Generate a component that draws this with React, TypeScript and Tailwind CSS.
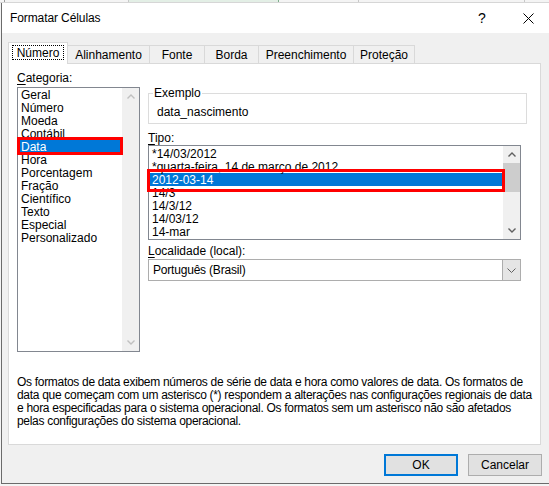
import { ReactNode } from "react";

const categories = [
  "Geral",
  "Número",
  "Moeda",
  "Contábil",
  "Data",
  "Hora",
  "Porcentagem",
  "Fração",
  "Científico",
  "Texto",
  "Especial",
  "Personalizado",
];

const types = [
  "*14/03/2012",
  "*quarta-feira, 14 de março de 2012",
  "2012-03-14",
  "14/3",
  "14/3/12",
  "14/03/12",
  "14-mar",
];

const tabs = [
  { label: "Alinhamento", w: "w-[82px]" },
  { label: "Fonte", w: "w-[55px]" },
  { label: "Borda", w: "w-[54px]" },
  { label: "Preenchimento", w: "w-[95px]" },
  { label: "Proteção", w: "w-[61px]" },
];

function Chevron({ dir, color }: { dir: "up" | "down"; color: string }) {
  return (
    <svg width="8" height="5" viewBox="0 0 8 5">
      <path
        d={dir === "up" ? "M0.5 4.5 L4 1 L7.5 4.5" : "M0.5 0.5 L4 4 L7.5 0.5"}
        fill="none"
        stroke={color}
        strokeWidth="1.4"
      />
    </svg>
  );
}

function ScrollBar({ enabled }: { enabled: boolean }) {
  const color = enabled ? "#606060" : "#c0c0c0";
  return (
    <div className="w-[17px] h-full bg-[#f0f0f0] flex flex-col">
      <div className="h-[17px] flex items-center justify-center">
        <Chevron dir="up" color={color} />
      </div>
      {enabled ? <div className="h-[29px] bg-[#cdcdcd]" /> : null}
      <div className="flex-1" />
      <div className="h-[17px] flex items-center justify-center">
        <Chevron dir="down" color={color} />
      </div>
    </div>
  );
}

// access key letter, underlined like the Windows labels
function Key({ children }: { children: ReactNode }) {
  return <span className="underline underline-offset-[2px]">{children}</span>;
}

export default function App() {
  return (
    <div className="relative w-[549px] h-[486px] overflow-hidden bg-[#f4f4f4] font-['Segoe_UI','Liberation_Sans',sans-serif] text-[12px] text-black">
      {/* worksheet peeking out behind the dialog */}
      <div className="h-[3px] flex border-b border-[#d6d6d6]">
        <div className="w-[5px] border-r border-[#9a9a9a]" />
        <div className="w-[124px] border-r border-[#c8c8c8]" />
        <div className="w-[150px] bg-[#e3efe6] border-r border-[#7fae8c]" />
        <div className="w-[80px] border-r border-[#c8c8c8]" />
        <div className="w-[166px] border-r border-[#c8c8c8]" />
      </div>

      <div className="ml-[1px] w-[560px] h-[481px] border-l border-b border-[#6b6b6b] bg-[#f0f0f0] flex flex-col">
        {/* title bar */}
        <div className="h-[30px] bg-white flex items-center">
          <span className="pl-[8px] text-[12px] tracking-[-0.1px]">Formatar Células</span>
          <div className="ml-auto w-[46px] flex justify-center text-[14px]">?</div>
          <div className="w-[46px] mr-[10px] flex justify-center">
            <svg width="11" height="11" viewBox="0 0 11 11">
              <path d="M0.5 0.5 L10.5 10.5 M10.5 0.5 L0.5 10.5" stroke="#000" strokeWidth="1" />
            </svg>
          </div>
        </div>

        <div className="pl-[6px] pt-[9px] flex flex-col">
          {/* tabs */}
          <div className="flex items-end h-[21px]">
            <div className="relative z-10 -mb-[1px] w-[60px] h-[22px] bg-white border-l border-t border-r border-[#d9d9d9] px-[3px] pt-[2px]">
              <div className="h-[15px] border border-dotted border-black flex items-center justify-center">
                Número
              </div>
            </div>
            {tabs.map((t) => (
              <div
                key={t.label}
                className={`${t.w} h-[18px] border-t border-r border-[#d9d9d9] flex items-center justify-center`}
              >
                {t.label}
              </div>
            ))}
          </div>

          {/* tab page */}
          <div className="w-[533px] h-[382px] border border-[#d9d9d9] bg-white px-[8px] pt-[6px]">
            <div className="flex gap-[8px]">
              {/* category list */}
              <div className="w-[123px]">
                <div className="h-[15px] leading-[15px] pt-[1px]">
                  <Key>C</Key>ategoria:
                </div>
                <div className="mt-[2px] h-[265px] border border-[#828790] flex relative">
                  <div className="flex-1">
                    {categories.map((c) => (
                      <div
                        key={c}
                        className={`h-[13px] leading-[14px] pl-[3px] ${
                          c === "Data" ? "bg-[#0078d7] text-white" : ""
                        }`}
                      >
                        {c}
                      </div>
                    ))}
                  </div>
                  <ScrollBar enabled={false} />
                  <div className="absolute -left-[1px] top-[49px] w-[106px] h-[18px] border-[3px] border-[#ff0000]" />
                </div>
              </div>

              {/* example, type list and locale */}
              <div className="w-[373px]">
                <div className="mt-[23px] w-[379px] h-[31px] border border-[#dcdcdc] relative pl-[8px] pt-[11px] leading-[15px]">
                  <span className="absolute left-[4px] -top-[8px] px-[1px] bg-white leading-[15px]">
                    Exemplo
                  </span>
                  data_nascimento
                </div>

                <div className="mt-[6px] h-[15px] leading-[15px] pt-[1px]">
                  <Key>T</Key>ipo:
                </div>
                <div className="h-[95px] border border-[#828790] flex relative">
                  <div className="flex-1 pt-[1px]">
                    {types.map((t) => (
                      <div
                        key={t}
                        className={`h-[13px] leading-[14px] pl-[3px] whitespace-nowrap ${
                          t === "2012-03-14" ? "bg-[#0078d7] text-white" : ""
                        }`}
                      >
                        {t}
                      </div>
                    ))}
                  </div>
                  <ScrollBar enabled={true} />
                  <div className="absolute -left-[2px] top-[23px] w-[358px] h-[23px] border-[3px] border-[#ff0000]" />
                </div>

                <div className="mt-[3px] h-[15px] leading-[15px] pt-[1px]">
                  <Key>L</Key>ocalidade (local):
                </div>
                <div className="mt-[1px] h-[22px] border border-[#adadad] flex items-center">
                  <span className="flex-1 pl-[4px] tracking-[-0.2px]">Português (Brasil)</span>
                  <div className="w-[18px] h-full bg-[#e5e5e5] border-l border-[#adadad] flex items-center justify-center">
                    <svg width="9" height="5" viewBox="0 0 9 5">
                      <path d="M0.5 0.5 L4.5 4.5 L8.5 0.5" fill="none" stroke="#606060" strokeWidth="1" />
                    </svg>
                  </div>
                </div>
              </div>
            </div>

            <p className="mt-[24px] leading-[13px] whitespace-nowrap tracking-[-0.3px]">
              Os formatos de data exibem números de série de data e hora como valores de data. Os formatos de
              <br />
              data que começam com um asterisco (*) respondem a alterações nas configurações regionais de data
              <br />
              e hora especificadas para o sistema operacional. Os formatos sem um asterisco não são afetados
              <br />
              pelas configurações do sistema operacional.
            </p>
          </div>

          {/* dialog buttons */}
          <div className="mt-[9px] ml-[376px] flex gap-[10px]">
            <button
              type="button"
              className="w-[74px] h-[22px] bg-[#e1e1e1] border-2 border-[#0078d7] flex items-center justify-center"
            >
              OK
            </button>
            <button
              type="button"
              className="w-[74px] h-[22px] bg-[#e1e1e1] border border-[#adadad] flex items-center justify-center"
            >
              Cancelar
            </button>
          </div>
        </div>
      </div>
    </div>
  );
}
